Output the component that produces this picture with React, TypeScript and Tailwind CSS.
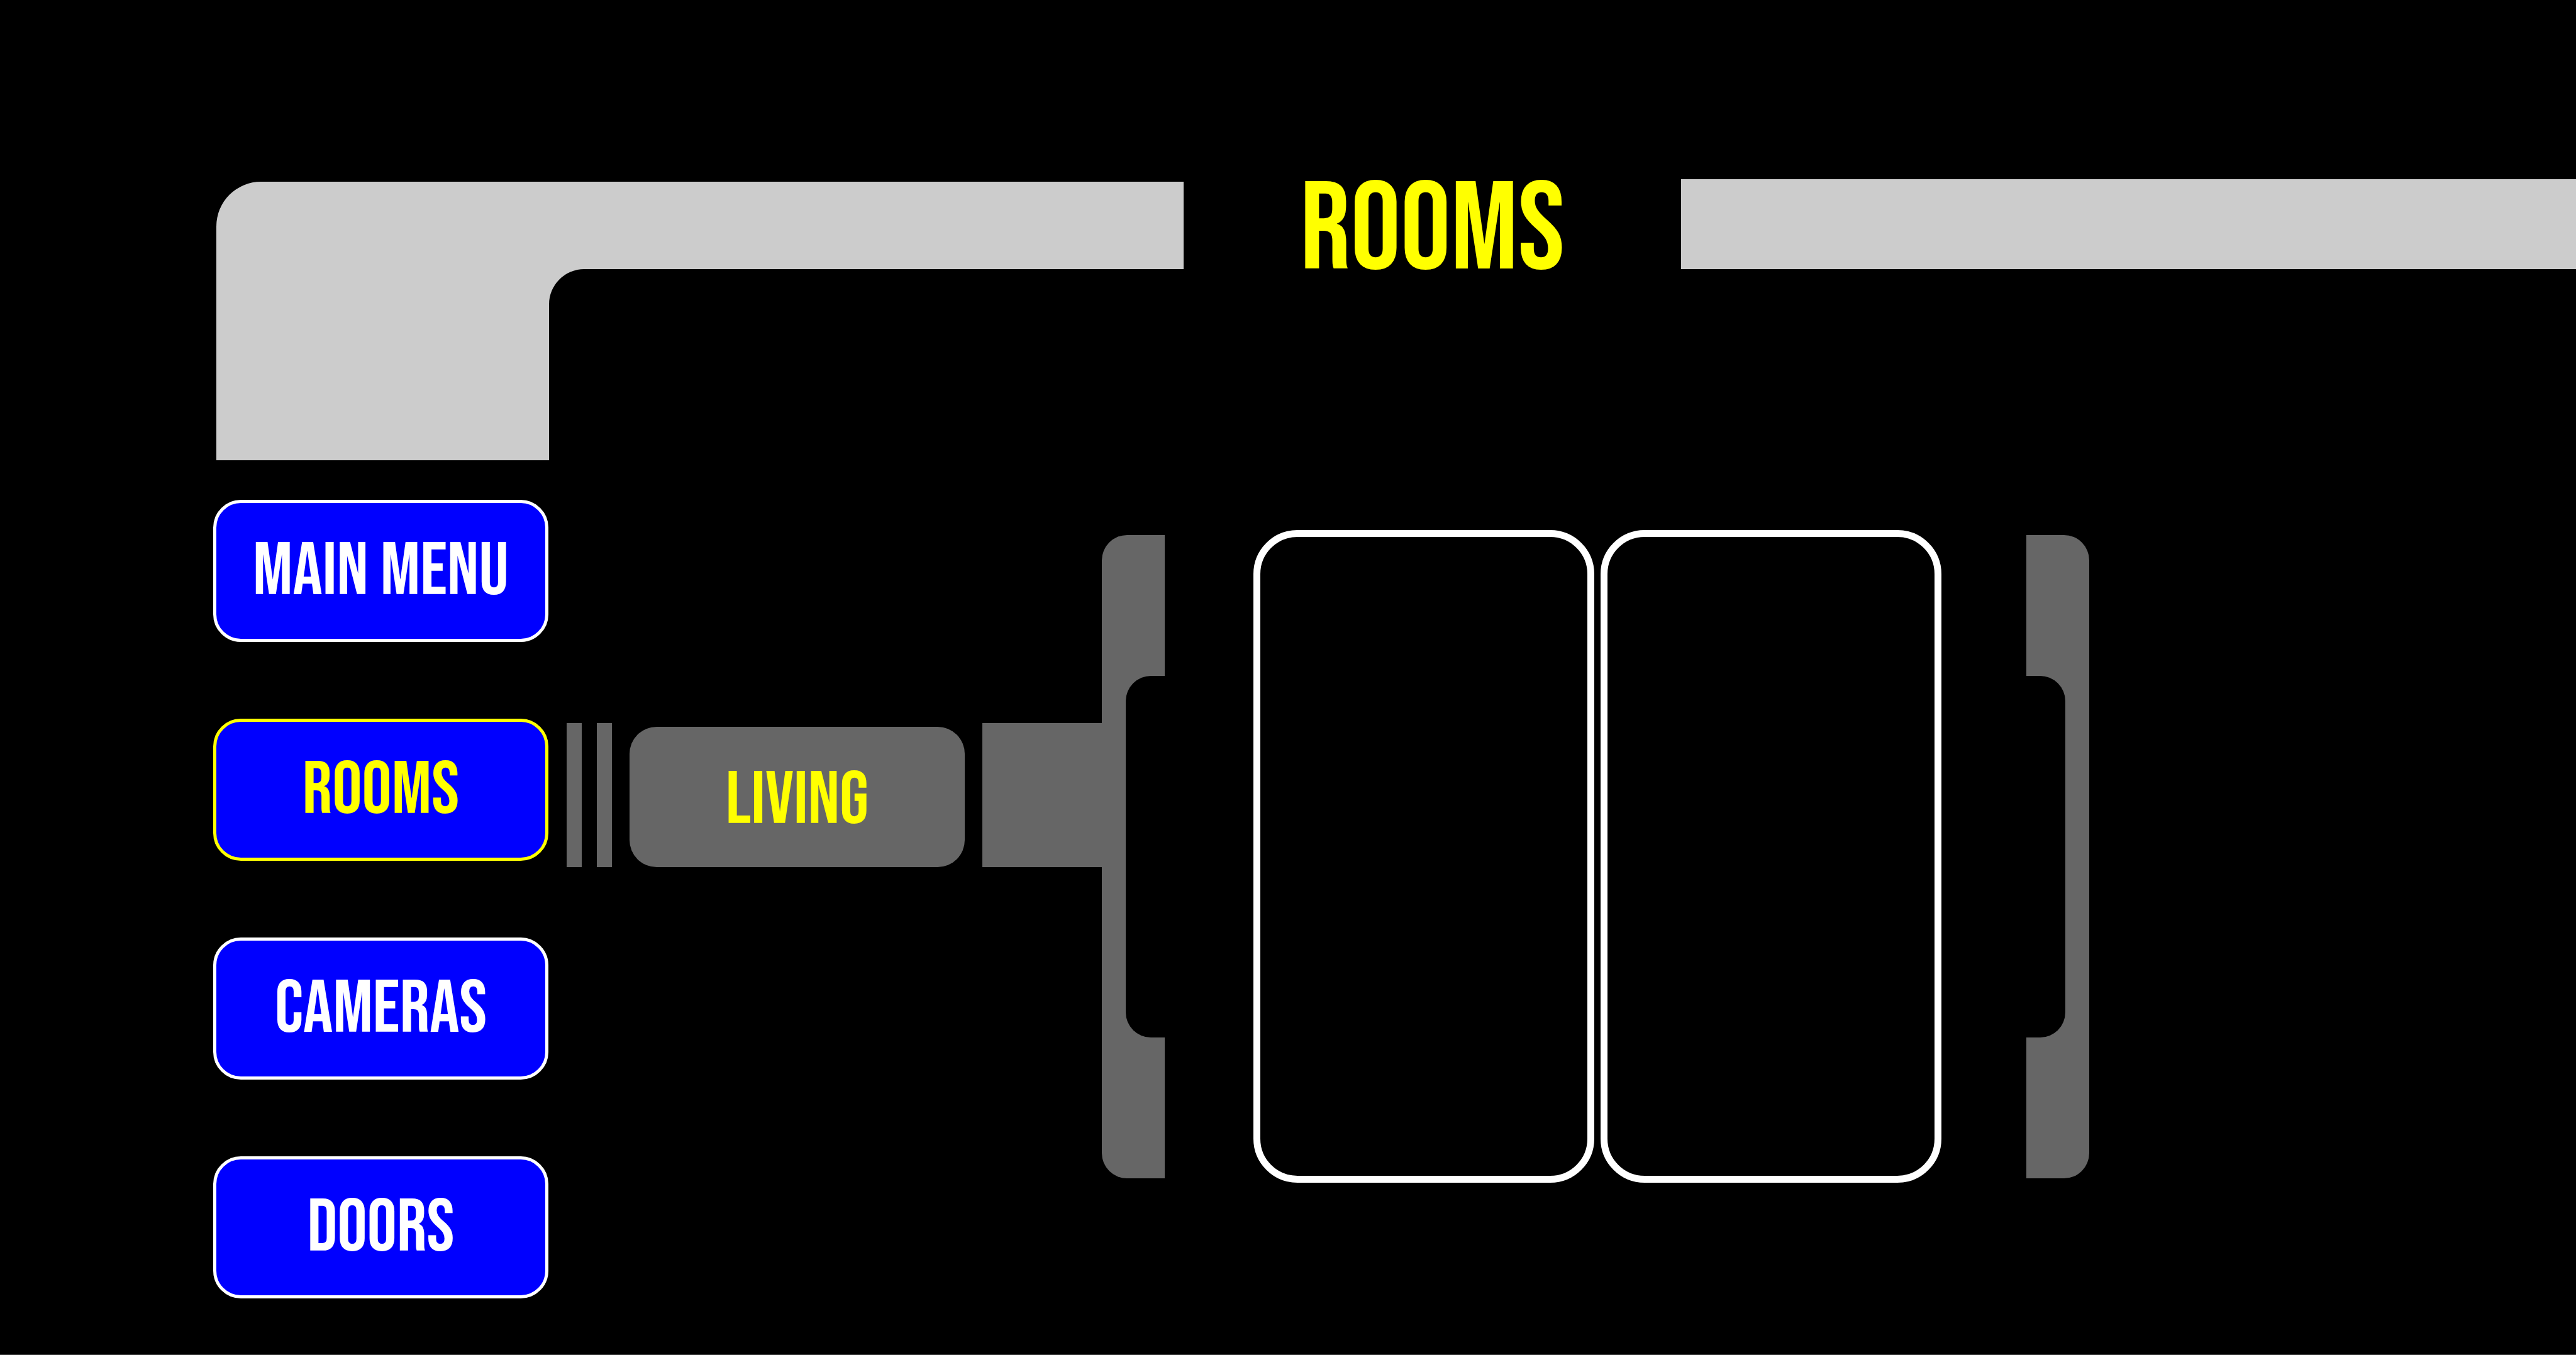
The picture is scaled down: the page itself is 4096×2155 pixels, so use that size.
const menu = [
  { label: "MAIN MENU", active: false },
  { label: "ROOMS", active: true },
  { label: "CAMERAS", active: false },
  { label: "DOORS", active: false },
];

function Header() {
  return (
    <header className="flex items-start pl-[344px]">
      <div className="mt-1 h-[443px] w-[1538px] rounded-tl-[71px] bg-[#cccccc] pt-[139px] pl-[529px]">
        <div className="h-full rounded-tl-[56px] bg-black" />
      </div>
      <h1 className="w-[791px] pt-[11px] text-center text-[199px] leading-[143px] text-[#ffff00]">ROOMS</h1>
      <div className="h-[143px] flex-1 bg-[#cccccc]" />
    </header>
  );
}

function Menu() {
  return (
    <nav className="flex w-[533px] shrink-0 flex-col gap-[122px]">
      {menu.map(({ label, active }) => (
        <button
          key={label}
          type="button"
          aria-current={active ? "page" : undefined}
          className={
            "h-[226px] rounded-[44px] border-[5px] bg-[#0000ff] pt-1 text-[118px] leading-none " +
            (active ? "border-[#ffff00] text-[#ffff00]" : "border-white text-white")
          }
        >
          {label}
        </button>
      ))}
    </nav>
  );
}

function Connector() {
  return (
    <div className="mt-[307px] ml-[29px] flex h-[229px] shrink-0 items-end gap-7">
      <div className="flex h-full gap-6">
        <div className="w-6 bg-[#666666]" />
        <div className="w-6 bg-[#666666]" />
      </div>
      <button
        type="button"
        className="h-[223px] w-[533px] rounded-[43px] bg-[#666666] pt-3 text-[118px] leading-none text-[#ffff00]"
      >
        LIVING
      </button>
      <div className="h-full w-[190px] bg-[#666666]" />
    </div>
  );
}

function Stage() {
  return (
    <section aria-label="Living" className="flex flex-1 items-start pt-12 pr-[774px]">
      <Connector />
      <div className="mt-2 h-[1023px] w-[100px] shrink-0 rounded-l-[40px] bg-[#666666] py-[224px] pl-[38px]">
        <div className="h-full rounded-l-[40px] bg-black" />
      </div>
      <div className="ml-[141px] mr-[135px] flex h-[1038px] flex-1 gap-2.5">
        <div className="flex-1 rounded-[70px] border-[11px] border-white" />
        <div className="flex-1 rounded-[70px] border-[11px] border-white" />
      </div>
      <div className="mt-2 h-[1023px] w-[100px] shrink-0 rounded-r-[40px] bg-[#666666] py-[224px] pr-[38px]">
        <div className="h-full rounded-r-[40px] bg-black" />
      </div>
    </section>
  );
}

export default function App() {
  return (
    <main className="min-h-screen w-full border-b border-[#444444] bg-black pt-[285px] font-['Bebas_Neue','Oswald','Roboto_Condensed',sans-serif] font-normal">
      <Header />
      <div className="mt-[63px] flex items-start pl-[339px]">
        <Menu />
        <Stage />
      </div>
    </main>
  );
}
